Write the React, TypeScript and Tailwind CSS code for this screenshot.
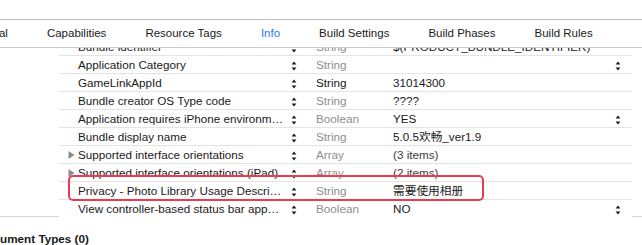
import React from 'react'

interface PlistRow {
  key: string
  type: string
  value: string
  disclosure?: boolean
  typeDark?: boolean
  popup?: boolean
  valueMuted?: boolean
}

const rows: PlistRow[] = [
  { key: 'Bundle identifier', type: 'String', value: '$(PRODUCT_BUNDLE_IDENTIFIER)' },
  { key: 'Application Category', type: 'String', value: '', popup: true },
  { key: 'GameLinkAppId', type: 'String', value: '31014300', typeDark: true },
  { key: 'Bundle creator OS Type code', type: 'String', value: '????' },
  { key: 'Application requires iPhone environm…', type: 'Boolean', value: 'YES', popup: true },
  { key: 'Bundle display name', type: 'String', value: '5.0.5欢畅_ver1.9' },
  { key: 'Supported interface orientations', type: 'Array', value: '(3 items)', disclosure: true, valueMuted: true },
  { key: 'Supported interface orientations (iPad)', type: 'Array', value: '(2 items)', disclosure: true, valueMuted: true },
  { key: 'Privacy - Photo Library Usage Descri…', type: 'String', value: '需要使用相册' },
  { key: 'View controller-based status bar app…', type: 'Boolean', value: 'NO', popup: true },
]

const tabs = ['General', 'Capabilities', 'Resource Tags', 'Info', 'Build Settings', 'Build Phases', 'Build Rules']

function Stepper() {
  return (
    <svg width="6" height="17" viewBox="0 0 6 17" className="shrink-0">
      <polygon points="0.6,8.4 3,5.6 5.4,8.4" fill="#1a1a1a" />
      <polygon points="0.6,11.6 5.4,11.6 3,14.4" fill="#1a1a1a" />
    </svg>
  )
}

function Disclosure() {
  return (
    <svg width="7" height="17" viewBox="0 0 7 17">
      <polygon points="0.5,5 6.5,9 0.5,13" fill="#8c8c8c" />
    </svg>
  )
}

export default function App() {
  return (
    <div className="relative w-[642px] h-[245px] overflow-hidden bg-white text-[11.7px] text-[#1a1a1a] font-['Liberation_Sans','Noto_Sans_CJK_SC',sans-serif]">
      {/* Tab bar */}
      <div className="mt-[19px] h-[29px] border-t border-t-[#bdbdbd] border-b border-b-[#cacaca] flex items-center gap-[39px] whitespace-nowrap leading-[15px] text-[11.5px]">
        {tabs.map((tab, i) => (
          <span
            key={tab}
            className={`${i === 0 ? 'ml-[-33px]' : ''} ${tab === 'Info' ? 'text-[#1f7ef0]' : 'text-[#1a1a1a]'}`}
          >
            {tab}
          </span>
        ))}
      </div>

      {/* Custom iOS target properties */}
      <div className="flex h-[169px] overflow-hidden">
        <div className="w-[59px] shrink-0 border-b border-b-[#d6d6d6]" />
        <div className="w-[573px] shrink-0">
          {rows.map((row, i) => (
            <div
              key={row.key}
              className={`flex h-[18px] border-b leading-[17px] whitespace-nowrap ${
                i === 0 ? 'mt-[-10px]' : ''
              } ${i === rows.length - 1 ? 'border-b-transparent' : 'border-b-[#e4e4e4]'}`}
            >
              <div className="w-[9px] shrink-0" />
              <div className="w-[10px] shrink-0">{row.disclosure && <Disclosure />}</div>
              <div className="w-[207px] shrink-0 overflow-hidden text-ellipsis">{row.key}</div>
              <div className="w-[6px] shrink-0" />
              <Stepper />
              <div className="w-[19px] shrink-0" />
              <div className={`w-[77px] shrink-0 ${row.typeDark ? 'text-[#1a1a1a]' : 'text-[#8e8e8e]'}`}>{row.type}</div>
              <div className={`w-[222px] shrink-0 ${row.valueMuted ? 'text-[#3c3c3c]' : 'text-[#1a1a1a]'}`}>{row.value}</div>
              {row.popup && <Stepper />}
            </div>
          ))}
        </div>
        <div className="flex-1 border-b border-b-[#d6d6d6]" />
      </div>

      {/* Document types header */}
      <div className="mt-[14px] ml-[-22px] font-bold leading-[15px] whitespace-nowrap">Document Types (0)</div>

      {/* Highlight box drawn over the privacy row */}
      <div className="absolute left-[68px] top-[175px] w-[416px] h-[26px] rounded-[5px] border-[2.5px] border-[#ec3a4f]" />
    </div>
  )
}
